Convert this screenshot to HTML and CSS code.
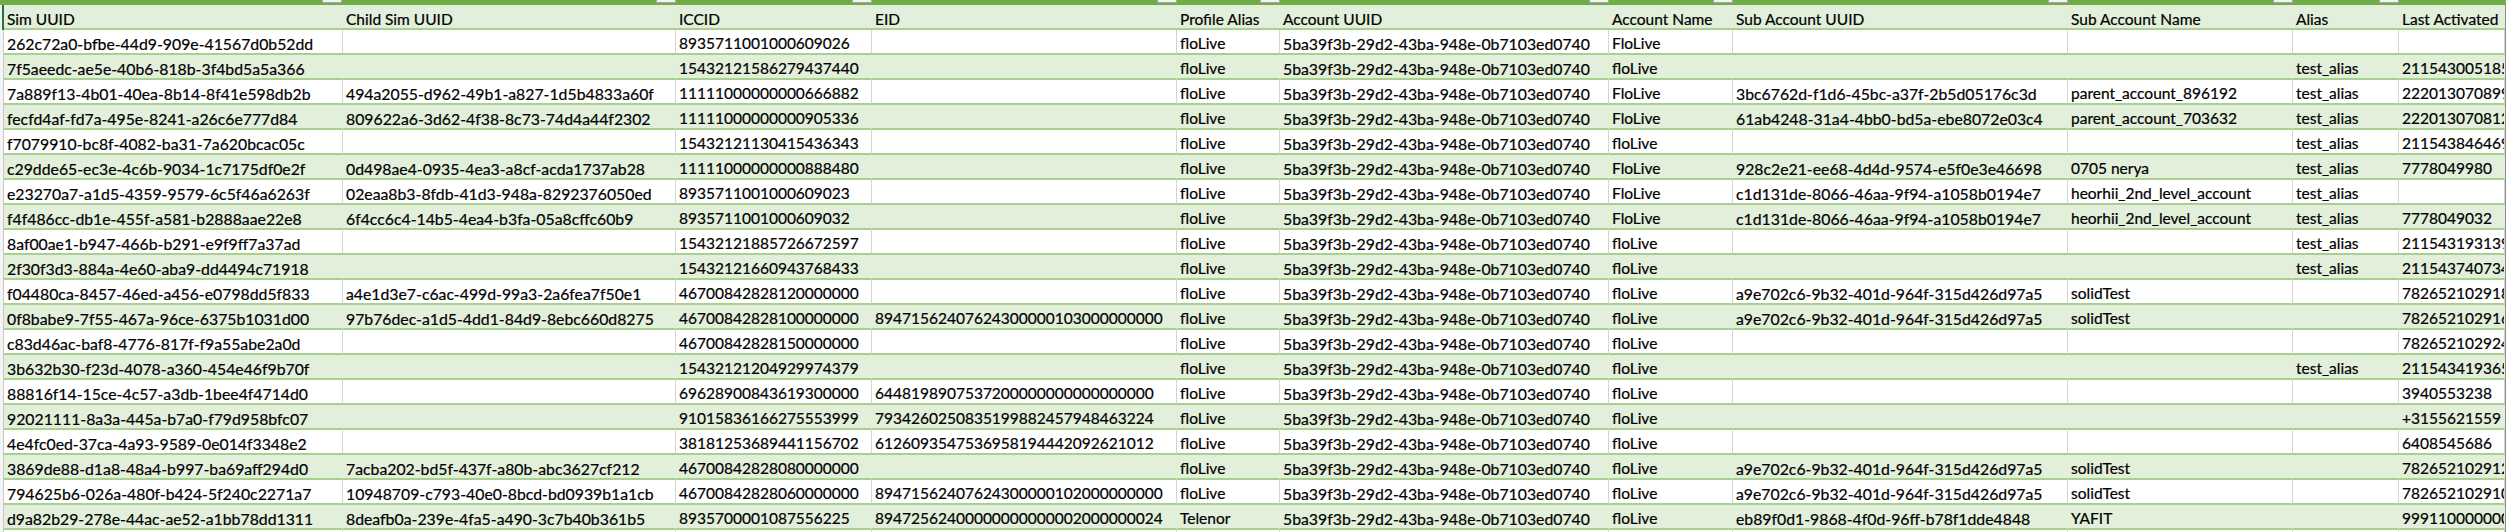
FILE: index.html
```html
<!DOCTYPE html>
<html lang="en">
<head>
<meta charset="utf-8">
<title>SIM export</title>
<link rel="stylesheet" href="styles.css">
</head>
<body>
<div class="sheet">
<div class="band">
<span class="fb f1"></span><span class="fb f2"></span><span class="fb f3"></span><span class="fb f4"></span><span class="fb f5"></span><span class="fb f6"></span><span class="fb f7"></span><span class="fb f8"></span><span class="fb f9"></span><span class="fb f10"></span>
</div>
<table>
<colgroup><col class="c1"><col class="c2"><col class="c3"><col class="c4"><col class="c5"><col class="c6"><col class="c7"><col class="c8"><col class="c9"><col class="c10"><col class="c11"></colgroup>
<thead><tr><th>Sim UUID</th><th>Child Sim UUID</th><th>ICCID</th><th>EID</th><th>Profile Alias</th><th>Account UUID</th><th>Account Name</th><th>Sub Account UUID</th><th>Sub Account Name</th><th>Alias</th><th>Last Activated</th></tr></thead>
<tbody>
<tr><td>262c72a0-bfbe-44d9-909e-41567d0b52dd</td><td></td><td>8935711001000609026</td><td></td><td>floLive</td><td>5ba39f3b-29d2-43ba-948e-0b7103ed0740</td><td>FloLive</td><td></td><td></td><td></td><td></td></tr>
<tr><td>7f5aeedc-ae5e-40b6-818b-3f4bd5a5a366</td><td></td><td>15432121586279437440</td><td></td><td>floLive</td><td>5ba39f3b-29d2-43ba-948e-0b7103ed0740</td><td>floLive</td><td></td><td></td><td>test_alias</td><td>211543005185</td></tr>
<tr><td>7a889f13-4b01-40ea-8b14-8f41e598db2b</td><td>494a2055-d962-49b1-a827-1d5b4833a60f</td><td>11111000000000666882</td><td></td><td>floLive</td><td>5ba39f3b-29d2-43ba-948e-0b7103ed0740</td><td>FloLive</td><td>3bc6762d-f1d6-45bc-a37f-2b5d05176c3d</td><td>parent_account_896192</td><td>test_alias</td><td>222013070899</td></tr>
<tr><td>fecfd4af-fd7a-495e-8241-a26c6e777d84</td><td>809622a6-3d62-4f38-8c73-74d4a44f2302</td><td>11111000000000905336</td><td></td><td>floLive</td><td>5ba39f3b-29d2-43ba-948e-0b7103ed0740</td><td>FloLive</td><td>61ab4248-31a4-4bb0-bd5a-ebe8072e03c4</td><td>parent_account_703632</td><td>test_alias</td><td>222013070812</td></tr>
<tr><td>f7079910-bc8f-4082-ba31-7a620bcac05c</td><td></td><td>15432121130415436343</td><td></td><td>floLive</td><td>5ba39f3b-29d2-43ba-948e-0b7103ed0740</td><td>floLive</td><td></td><td></td><td>test_alias</td><td>211543846469</td></tr>
<tr><td>c29dde65-ec3e-4c6b-9034-1c7175df0e2f</td><td>0d498ae4-0935-4ea3-a8cf-acda1737ab28</td><td>11111000000000888480</td><td></td><td>floLive</td><td>5ba39f3b-29d2-43ba-948e-0b7103ed0740</td><td>FloLive</td><td>928c2e21-ee68-4d4d-9574-e5f0e3e46698</td><td>0705 nerya</td><td>test_alias</td><td>7778049980</td></tr>
<tr><td>e23270a7-a1d5-4359-9579-6c5f46a6263f</td><td>02eaa8b3-8fdb-41d3-948a-8292376050ed</td><td>8935711001000609023</td><td></td><td>floLive</td><td>5ba39f3b-29d2-43ba-948e-0b7103ed0740</td><td>FloLive</td><td>c1d131de-8066-46aa-9f94-a1058b0194e7</td><td>heorhii_2nd_level_account</td><td>test_alias</td><td></td></tr>
<tr><td>f4f486cc-db1e-455f-a581-b2888aae22e8</td><td>6f4cc6c4-14b5-4ea4-b3fa-05a8cffc60b9</td><td>8935711001000609032</td><td></td><td>floLive</td><td>5ba39f3b-29d2-43ba-948e-0b7103ed0740</td><td>FloLive</td><td>c1d131de-8066-46aa-9f94-a1058b0194e7</td><td>heorhii_2nd_level_account</td><td>test_alias</td><td>7778049032</td></tr>
<tr><td>8af00ae1-b947-466b-b291-e9f9ff7a37ad</td><td></td><td>15432121885726672597</td><td></td><td>floLive</td><td>5ba39f3b-29d2-43ba-948e-0b7103ed0740</td><td>floLive</td><td></td><td></td><td>test_alias</td><td>211543193139</td></tr>
<tr><td>2f30f3d3-884a-4e60-aba9-dd4494c71918</td><td></td><td>15432121660943768433</td><td></td><td>floLive</td><td>5ba39f3b-29d2-43ba-948e-0b7103ed0740</td><td>floLive</td><td></td><td></td><td>test_alias</td><td>211543740734</td></tr>
<tr><td>f04480ca-8457-46ed-a456-e0798dd5f833</td><td>a4e1d3e7-c6ac-499d-99a3-2a6fea7f50e1</td><td>46700842828120000000</td><td></td><td>floLive</td><td>5ba39f3b-29d2-43ba-948e-0b7103ed0740</td><td>floLive</td><td>a9e702c6-9b32-401d-964f-315d426d97a5</td><td>solidTest</td><td></td><td>782652102918</td></tr>
<tr><td>0f8babe9-7f55-467a-96ce-6375b1031d00</td><td>97b76dec-a1d5-4dd1-84d9-8ebc660d8275</td><td>46700842828100000000</td><td>89471562407624300000103000000000</td><td>floLive</td><td>5ba39f3b-29d2-43ba-948e-0b7103ed0740</td><td>floLive</td><td>a9e702c6-9b32-401d-964f-315d426d97a5</td><td>solidTest</td><td></td><td>782652102916</td></tr>
<tr><td>c83d46ac-baf8-4776-817f-f9a55abe2a0d</td><td></td><td>46700842828150000000</td><td></td><td>floLive</td><td>5ba39f3b-29d2-43ba-948e-0b7103ed0740</td><td>floLive</td><td></td><td></td><td></td><td>782652102924</td></tr>
<tr><td>3b632b30-f23d-4078-a360-454e46f9b70f</td><td></td><td>15432121204929974379</td><td></td><td>floLive</td><td>5ba39f3b-29d2-43ba-948e-0b7103ed0740</td><td>floLive</td><td></td><td></td><td>test_alias</td><td>211543419365</td></tr>
<tr><td>88816f14-15ce-4c57-a3db-1bee4f4714d0</td><td></td><td>69628900843619300000</td><td>6448198907537200000000000000000</td><td>floLive</td><td>5ba39f3b-29d2-43ba-948e-0b7103ed0740</td><td>floLive</td><td></td><td></td><td></td><td>3940553238</td></tr>
<tr><td>92021111-8a3a-445a-b7a0-f79d958bfc07</td><td></td><td>91015836166275553999</td><td>7934260250835199882457948463224</td><td>floLive</td><td>5ba39f3b-29d2-43ba-948e-0b7103ed0740</td><td>floLive</td><td></td><td></td><td></td><td>+3155621559</td></tr>
<tr><td>4e4fc0ed-37ca-4a93-9589-0e014f3348e2</td><td></td><td>38181253689441156702</td><td>6126093547536958194442092621012</td><td>floLive</td><td>5ba39f3b-29d2-43ba-948e-0b7103ed0740</td><td>floLive</td><td></td><td></td><td></td><td>6408545686</td></tr>
<tr><td>3869de88-d1a8-48a4-b997-ba69aff294d0</td><td>7acba202-bd5f-437f-a80b-abc3627cf212</td><td>46700842828080000000</td><td></td><td>floLive</td><td>5ba39f3b-29d2-43ba-948e-0b7103ed0740</td><td>floLive</td><td>a9e702c6-9b32-401d-964f-315d426d97a5</td><td>solidTest</td><td></td><td>782652102912</td></tr>
<tr><td>794625b6-026a-480f-b424-5f240c2271a7</td><td>10948709-c793-40e0-8bcd-bd0939b1a1cb</td><td>46700842828060000000</td><td>89471562407624300000102000000000</td><td>floLive</td><td>5ba39f3b-29d2-43ba-948e-0b7103ed0740</td><td>floLive</td><td>a9e702c6-9b32-401d-964f-315d426d97a5</td><td>solidTest</td><td></td><td>782652102910</td></tr>
<tr><td>d9a82b29-278e-44ac-ae52-a1bb78dd1311</td><td>8deafb0a-239e-4fa5-a490-3c7b40b361b5</td><td>8935700001087556225</td><td>89472562400000000000002000000024</td><td>Telenor</td><td>5ba39f3b-29d2-43ba-948e-0b7103ed0740</td><td>floLive</td><td>eb89f0d1-9868-4f0d-96ff-b78f1dde4848</td><td>YAFIT</td><td></td><td>999110000000</td></tr>
<tr><td></td><td></td><td></td><td></td><td></td><td></td><td></td><td></td><td></td><td></td><td></td></tr>
</tbody>
</table>
</div>
</body>
</html>
```
FILE: styles.css
```css
html, body { margin: 0; padding: 0; background: #f4f4f4; }
body { width: 2506px; height: 532px; overflow: hidden; }
.sheet { position: relative; display: flex; flex-direction: column; width: 2506px; padding: 0 1px 0 4px; box-sizing: border-box; font-family: "Lato", "Liberation Sans", sans-serif; font-size: 15.5px; color: #000; -webkit-text-stroke: 0.2px #000; }
.band { position: relative; height: 5px; background: #70ad47; margin: 0 -1px 0 -4px; }
.fb { position: absolute; top: -1px; width: 20px; height: 4px; background: #f2f2f2; border: 1px solid #a6a6a6; box-sizing: border-box; }
.f1 { left: 322px; } .f2 { left: 656px; } .f3 { left: 852px; } .f4 { left: 1157px; } .f5 { left: 1260px; } .f6 { left: 1589px; } .f7 { left: 1713px; } .f8 { left: 2048px; } .f9 { left: 2273px; } .f10 { left: 2379px; }
table { border-collapse: separate; border-spacing: 0; table-layout: fixed; width: 2501px; background: #fff; box-shadow: -1px 0 0 #c8c8c8, 1px 0 0 #8c8c8c; }
.c1 { width: 339px; } .c2 { width: 333px; } .c3 { width: 196px; } .c4 { width: 305px; } .c5 { width: 103px; } .c6 { width: 329px; } .c7 { width: 124px; } .c8 { width: 335px; } .c9 { width: 225px; } .c10 { width: 106px; } .c11 { width: 106px; }
th, td { height: 25px; box-sizing: border-box; padding: 4px 0 0 3px; font-weight: 400; text-align: left; white-space: nowrap; overflow: hidden; line-height: 19px; border-bottom: 2px solid #a9d08e; vertical-align: top; }
td { border-right: 1px solid #d4d4d4; }
th { background: #e2efda; padding-top: 5px; line-height: 18px; }
td:nth-child(1), td:nth-child(2), td:nth-child(6), td:nth-child(8) { font-size: 15.8px; }
thead th:first-child { box-shadow: -2px 0 0 #217346; }
tbody tr:nth-child(even) td { background: #e2efda; border-right-color: #e2efda; }
tbody tr:last-child td { border-bottom: 0; }
```
